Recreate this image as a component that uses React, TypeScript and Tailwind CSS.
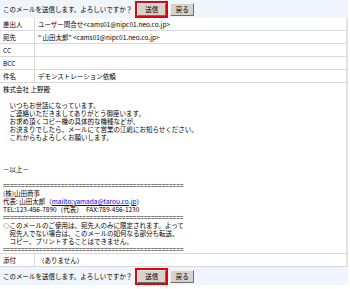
import React from 'react';

const rule = '='.repeat(50);

function ActionBar() {
  return (
    <div className="flex h-[18px] items-center bg-[#eef5fc] pl-[3px]">
      <span>このメールを送信します。よろしいですか？</span>
      <span className="ml-[3px] border-2 border-[#e8000b] p-0">
        <button className="flex h-[13px] w-[29px] items-center justify-center border border-t-[#f4f4f4] border-l-[#f4f4f4] border-r-[#6e6e6e] border-b-[#6e6e6e] bg-[#d6d3cc] leading-none">
          送信
        </button>
      </span>
      <button className="ml-[2px] flex h-[13px] w-[24px] items-center justify-center border border-t-[#f4f4f4] border-l-[#f4f4f4] border-r-[#6e6e6e] border-b-[#6e6e6e] bg-[#d6d3cc] leading-none">
        戻る
      </button>
    </div>
  );
}

function Row({ label, children }: { label: string; children?: React.ReactNode }) {
  return (
    <div className="flex h-[13px] border-b border-[#d9d9d9]">
      <div className="flex w-[35px] items-center border-r border-[#d9d9d9] pl-[3px]">{label}</div>
      <div className="flex flex-1 items-center pl-[3px] whitespace-pre">{children}</div>
    </div>
  );
}

export default function App() {
  return (
    <div
      className="h-[289px] w-[350px] bg-white text-[6.5px] leading-[8px] text-black"
      style={{ fontFamily: '"Noto Sans CJK JP", "Liberation Sans", sans-serif' }}
    >
      <div className="w-[348px]">
        <ActionBar />
        <div className="border-r-2 border-[#e2e2e2]">
          <Row label="差出人">ユーザー問合せ&lt;cams01@nipc01.neo.co.jp&gt;</Row>
          <Row label="宛先">" 山田太郎" &lt;cams01@nipc01.neo.co.jp&gt;</Row>
          <Row label="CC" />
          <Row label="BCC" />
          <Row label="件名">デモンストレーション依頼</Row>
          <div className="h-[171px] border-b border-[#d9d9d9] pl-[3px] pt-[2px] whitespace-pre">
            <div>株式会社 上野殿</div>
            <div>&nbsp;</div>
            <div>　いつもお世話になっています。</div>
            <div>　ご連絡いただきましてありがとう御座います。</div>
            <div>　お求め頂くコピー機の具体的な機種などが、</div>
            <div>　お決まりでしたら、メールにて営業の江嶋にお知らせください。</div>
            <div>　これからもよろしくお願いします。</div>
            <div>&nbsp;</div>
            <div>&nbsp;</div>
            <div>&nbsp;</div>
            <div>－以上－</div>
            <div>&nbsp;</div>
            <div>{rule}</div>
            <div>(株)山田商事</div>
            <div>
              代表: 山田太郎（<a className="text-[#0000ee] underline">mailto:yamada@tarou.co.jp</a>）
            </div>
            <div>TEL:123-456-7890（代表）　FAX:789-456-1230</div>
            <div>{rule}</div>
            <div>◇このメールのご使用は、宛先人のみに限定されます。よって</div>
            <div>　宛先人でない場合は、このメールの如何なる部分も転送、</div>
            <div>　コピー、プリントすることはできません。</div>
            <div>{rule}</div>
          </div>
          <Row label="添付">（ありません）</Row>
        </div>
        <ActionBar />
      </div>
    </div>
  );
}
